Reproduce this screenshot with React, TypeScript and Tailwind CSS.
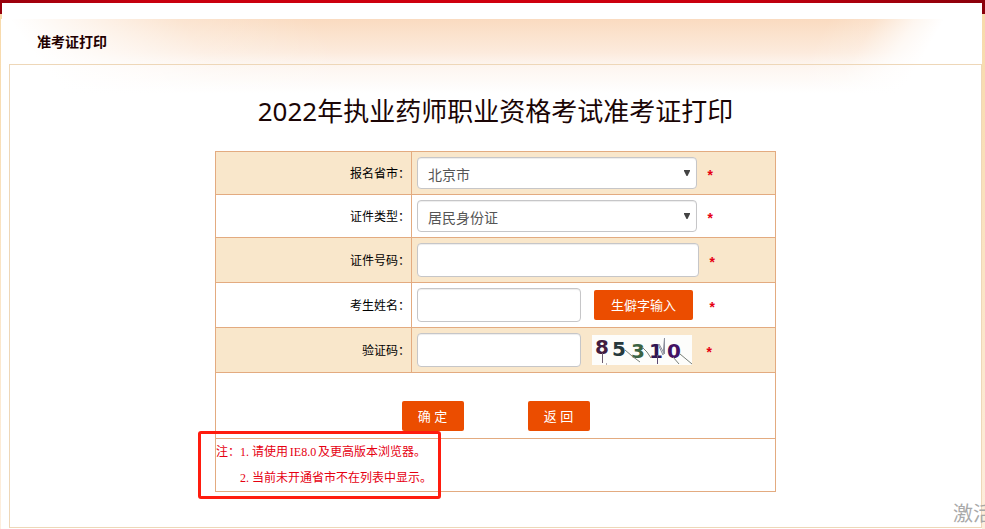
import React from 'react';

interface RowProps {
  label: string;
  htmlFor: string;
  shaded?: boolean;
  tall?: boolean;
  children: React.ReactNode;
}

const controlClass =
  'block w-full rounded-[4px] border border-[#c6c6c8] bg-white text-sm text-[#555] shadow-[inset_0_1px_1px_rgba(0,0,0,0.075)] outline-none focus:border-[#66afe9]';

const buttonClass =
  'h-[30px] shrink-0 rounded-[2px] bg-[#eb4d00] text-[13px] leading-[30px] text-white hover:bg-[#d64600]';

const Row: React.FC<RowProps> = ({ label, htmlFor, shaded, tall, children }) => (
  <tr className={`${shaded ? 'bg-[#f9e7cb]' : 'bg-white'} ${tall ? 'h-[45px]' : 'h-[43px]'}`}>
    <th scope="row" className="w-[196px] border border-[#e3ab80] p-0 pt-[2px] pr-px text-right text-xs font-normal">
      <label htmlFor={htmlFor}>{label}：</label>
    </th>
    <td className="border border-[#e3ab80] p-0 pl-[5px]">
      <div className="flex items-center">{children}</div>
    </td>
  </tr>
);

const Required: React.FC = () => (
  <span className="pt-2 font-['Liberation_Mono',monospace] text-sm leading-4 font-bold text-[#e60012]">*</span>
);

const Select: React.FC<{ id: string; options: string[] }> = ({ id, options }) => (
  <div className="relative mr-[9px] w-[280px]">
    <select id={id} className={`${controlClass} h-8 appearance-none pt-[3px] pl-[10px]`}>
      {options.map((option) => (
        <option key={option}>{option}</option>
      ))}
    </select>
    <svg
      className="pointer-events-none absolute top-[13px] right-[7px] h-[6px] w-[6px] text-[#444]"
      viewBox="0 0 6 6"
      fill="currentColor"
      aria-hidden="true"
    >
      <path d="M0 0h6v1L3.500 6h-1L0 1z" />
    </svg>
  </div>
);

const Captcha: React.FC = () => (
  <svg
    className="mr-[13px] ml-[11px] h-[30px] w-[100px] shrink-0 bg-[#fdfdfb]"
    viewBox="0 0 100 30"
    role="img"
    aria-label="验证码"
  >
    <g fontFamily="DejaVu Sans, sans-serif" fontWeight="700" fontSize="20">
      <text x="3" y="19" fill="#431d40">8</text>
      <text x="20" y="21" fill="#27393d">5</text>
      <text x="39" y="23" fill="#3b6343">3</text>
      <text x="57" y="23" fill="#301754">1</text>
      <text x="75" y="23" fill="#431263">0</text>
    </g>
    <g fill="none" stroke="#777f78" strokeWidth="1">
      <path d="M10.500 18v10M14 29h1" stroke="#6b5a6e" />
      <path d="M33 15l7 6 8 6" />
      <path d="M50 12l5 5 4 6" />
      <path d="M65.500 20v9" stroke="#5d4a72" />
      <path d="M66 9l5 11L72.500 3v16L67 9" stroke="#8d909c" />
      <path d="M81 22l6 7M88 19l6 5 6 5" />
    </g>
  </svg>
);

const Latin: React.FC<{ wide?: boolean; children: string }> = ({ wide, children }) => (
  <span className={`inline-block font-['Liberation_Serif',serif] ${wide ? 'w-[30px] text-center' : 'w-3'}`}>
    {children}
  </span>
);

const App: React.FC = () => {
  return (
    <div className="relative min-h-screen overflow-hidden bg-[linear-gradient(90deg,#98000c,#c9000f_15%,#d0000f_50%,#c9000f_75%,#8a000a),linear-gradient(#f7d9a9,#fdeede_529px)] bg-[length:100%_14px,100%_100%] bg-no-repeat pt-[3px] font-['Noto_Sans','Noto_Sans_CJK_SC',sans-serif] text-black">
      <div className="mr-[3px] ml-[2px] h-4 bg-white" />

      <main className="mr-[3px] ml-px bg-white bg-[linear-gradient(55deg,#fff_50px,#ffffffb0_110px,#ffffff40_190px,#fff0_300px),linear-gradient(-60deg,#fff_70px,#ffffffc0_95px,#ffffff30_130px,#fff0_170px),linear-gradient(#fadbc0,#fcebdd_34px,#fdf5ef_46px,#fff_74px)] bg-[length:100%_75px] bg-no-repeat pb-px">
        <h2 className="flex h-[45px] items-center pl-9 text-sm font-bold text-[#200]">准考证打印</h2>

        <section className="ml-2 border border-[#eed7b8] pb-[35px]">
          <h1 className="pt-7 pb-[22px] text-center text-[26px] leading-9 font-normal text-[#1a0505]">
            2022年执业药师职业资格考试准考证打印
          </h1>

          <form onSubmit={(e) => e.preventDefault()}>
            <table className="mx-auto w-full max-w-[561px] table-fixed border-collapse">
              <tbody>
                <Row label="报名省市" htmlFor="province" shaded>
                  <Select id="province" options={['北京市']} />
                  <Required />
                </Row>
                <Row label="证件类型" htmlFor="idType">
                  <Select id="idType" options={['居民身份证']} />
                  <Required />
                </Row>
                <Row label="证件号码" htmlFor="idNumber" shaded tall>
                  <div className="mr-[9px] w-[282px]">
                    <input id="idNumber" type="text" className={`${controlClass} h-[34px] px-3`} />
                  </div>
                  <Required />
                </Row>
                <Row label="考生姓名" htmlFor="name" tall>
                  <div className="w-[164px]">
                    <input id="name" type="text" className={`${controlClass} h-[34px] px-3`} />
                  </div>
                  <button type="button" className={`${buttonClass} mr-[15px] ml-[13px] w-[99px]`}>
                    生僻字输入
                  </button>
                  <Required />
                </Row>
                <Row label="验证码" htmlFor="captcha" shaded tall>
                  <div className="w-[164px]">
                    <input id="captcha" type="text" className={`${controlClass} h-[34px] px-3`} />
                  </div>
                  <Captcha />
                  <Required />
                </Row>
                <tr className="h-[66px]">
                  <td colSpan={2} className="border border-[#e3ab80] p-0">
                    <div className="flex justify-center gap-16 pt-7 pb-[7px]">
                      <button type="submit" className={`${buttonClass} w-[62px]`}>
                        确 定
                      </button>
                      <button type="button" className={`${buttonClass} w-[62px]`}>
                        返 回
                      </button>
                    </div>
                  </td>
                </tr>
                <tr className="h-[53px]">
                  <td colSpan={2} className="border border-[#e3ab80] p-0">
                    <div className="relative text-xs text-[#e60012]">
                      <p className="h-[26px] leading-[26px]">
                        注：<Latin>1.</Latin>请使用<Latin wide>IE8.0</Latin>及更高版本浏览器。
                      </p>
                      <p className="h-[26px] pl-6 leading-[26px]">
                        <Latin>2.</Latin>当前未开通省市不在列表中显示。
                      </p>
                      <div className="pointer-events-none absolute -top-2 -left-[18px] h-[68px] w-[243px] rounded-[3px] border-3 border-[#ff1c0e]" />
                    </div>
                  </td>
                </tr>
              </tbody>
            </table>
          </form>
        </section>
      </main>

      <div className="pointer-events-none absolute bottom-0 left-full -ml-8 text-xl leading-[30px] whitespace-nowrap text-[#a9a9a9]">
        激活
      </div>
    </div>
  );
};

export default App;
